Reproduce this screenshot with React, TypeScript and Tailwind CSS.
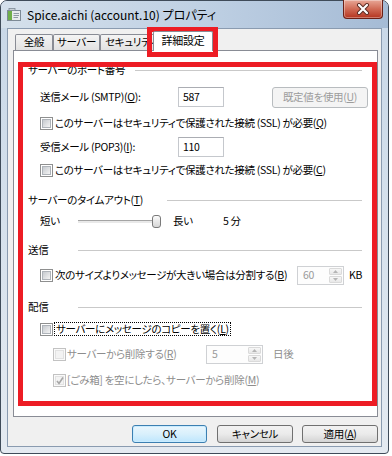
import React from "react";

function Check({ disabled, checked }: { disabled?: boolean; checked?: boolean }) {
  return (
    <span
      className={`relative flex h-[13px] w-[13px] shrink-0 items-center justify-center border ${
        disabled ? "border-[#c2c2c2] bg-[#fafafa]" : "border-[#8e8f8f] bg-white"
      }`}
    >
      <span
        className={`h-[9px] w-[9px] border ${
          disabled
            ? "border-[#e2e2e2] bg-[#f3f3f3]"
            : "border-[#aeb3b9] bg-gradient-to-br from-[#c6cacf] to-[#f4f4f4]"
        }`}
      />
      {checked && (
        <svg className="absolute left-[1px] top-[1px]" width="10" height="10" viewBox="0 0 10 10">
          <path d="M2 5 L4 7.5 L8 1.5" fill="none" stroke="#a6a6a6" strokeWidth="1.6" />
        </svg>
      )}
    </span>
  );
}

function Spin({ value, className }: { value: string; className: string }) {
  return (
    <div className={`flex shrink-0 border border-[#cfd1d4] bg-[#fdfdfd] ${className}`}>
      <span className="flex flex-1 items-center pl-[5px] text-[#9a9a9a]">{value}</span>
      <div className="flex w-[15px] flex-col gap-px p-px">
        <span className="flex flex-1 items-center justify-center rounded-[1px] border border-[#dadada] bg-gradient-to-b from-[#f7f7f7] to-[#e8e8e8]">
          <svg width="5" height="3" viewBox="0 0 5 3">
            <path d="M0 3 L2.5 0 L5 3 Z" fill="#b5b5b5" />
          </svg>
        </span>
        <span className="flex flex-1 items-center justify-center rounded-[1px] border border-[#dadada] bg-gradient-to-b from-[#f7f7f7] to-[#e8e8e8]">
          <svg width="5" height="3" viewBox="0 0 5 3">
            <path d="M0 0 L2.5 3 L5 0 Z" fill="#b5b5b5" />
          </svg>
        </span>
      </div>
    </div>
  );
}

function GroupHead({ children, w, className }: { children: React.ReactNode; w: string; className: string }) {
  return (
    <div className={`flex h-[18px] shrink-0 items-center ${className}`}>
      <span className={`shrink-0 whitespace-nowrap ${w}`}>{children}</span>
      <span className="mr-[7px] h-px flex-1 bg-[#c9c9c9]" />
    </div>
  );
}

export default function App() {
  return (
    <div className="relative h-[456px] w-[392px] overflow-hidden bg-white text-[10.5px] leading-none tracking-[-0.3px] text-black [font-family:'Noto_Sans_CJK_JP',sans-serif] [font-feature-settings:'palt']">
      {/* window frame */}
      <div className="flex h-[454px] w-[389px] flex-col rounded-t-[7px] rounded-b-[4px] border border-[#3f4b59] bg-gradient-to-b from-[#c8d7e7] via-[#d6e1ec] to-[#e4eaf1] px-[6px] pb-[6px]">
        {/* title bar */}
        <div className="relative -mx-[6px] flex h-[27px] shrink-0 items-center gap-[5px] rounded-t-[6px] bg-gradient-to-r from-[#d5e0eb] via-[#c0d1e4] to-[#a5bbd5] pl-[5px]">
          <svg width="16" height="16" viewBox="0 0 16 16">
            <rect x="1.5" y="3.5" width="13" height="10" fill="#e8ebee" stroke="#7d8a96" />
            <rect x="2" y="4" width="4" height="9" fill="#6fae4a" />
            <path d="M7.5 6.5 H13 M7.5 8.5 H13 M7.5 10.5 H12" stroke="#8e99a3" />
            <rect x="3" y="1.5" width="6" height="2" fill="#c9d0d6" stroke="#7d8a96" strokeWidth="0.8" />
          </svg>
          <span className="whitespace-nowrap text-[12px] tracking-normal text-black">Spice.aichi (account.10) プロパティ</span>
          <div className="absolute right-[5px] top-[-1px] flex h-[19px] w-[40px] items-center justify-center rounded-b-[4px] border border-t-0 border-[#6b2016] bg-gradient-to-b from-[#e7a797] via-[#d06a55] to-[#b4321c] shadow-[inset_0_0_0_1px_rgba(255,255,255,0.35)]">
            <svg width="14" height="12" viewBox="0 0 14 12">
              <path d="M3 2 L11 10 M11 2 L3 10" stroke="#5a2a22" strokeWidth="4" strokeLinecap="round" />
              <path d="M3 2 L11 10 M11 2 L3 10" stroke="#ffffff" strokeWidth="2.2" strokeLinecap="round" />
            </svg>
          </div>
        </div>

        {/* client area */}
        <div className="flex flex-1 flex-col border border-[#8a9bb0] bg-[#f0f0f0]">
          {/* tabs */}
          <div className="ml-[7px] mt-[2px] flex h-[19px] items-end">
            <div className="flex h-[16px] w-[38px] items-center justify-center rounded-t-[2px] border border-b-0 border-[#898c95] bg-gradient-to-b from-[#f4f4f4] to-[#e2e2e2]">
              全般
            </div>
            <div className="flex h-[16px] w-[47px] items-center justify-center rounded-t-[2px] border border-b-0 border-[#898c95] bg-gradient-to-b from-[#f4f4f4] to-[#e2e2e2]">
              サーバー
            </div>
            <div className="flex h-[16px] w-[56px] items-center overflow-hidden whitespace-nowrap rounded-t-[2px] border border-b-0 border-[#898c95] bg-gradient-to-b from-[#f4f4f4] to-[#e2e2e2] pl-[4px]">
              セキュリティ
            </div>
            <div className="relative z-10 -mb-px -ml-[3px] flex h-[20px] w-[60px] items-center justify-center rounded-t-[2px] border border-b-0 border-[#898c95] bg-white pb-[2px] text-[11px]">
              詳細設定
            </div>
          </div>

          {/* tab panel */}
          <div className="ml-[5px] flex h-[367px] w-[365px] flex-col border border-[#898c95] bg-white pl-[14px] pr-[8px]">
            <GroupHead w="w-[107px]" className="mt-[10px]">
              サーバーのポート番号
            </GroupHead>

            <div className="ml-[12px] mt-[8px] flex h-[20px] shrink-0 items-center">
              <span className="w-[138px] shrink-0 whitespace-nowrap">
                送信メール (SMTP)(<span className="underline">O</span>):
              </span>
              <span className="flex h-[20px] w-[46px] shrink-0 items-center border border-[#c5c8cd] border-t-[#abadb3] bg-white pl-[4px]">
                587
              </span>
              <span className="ml-[48px] flex h-[21px] w-[96px] shrink-0 items-center justify-center rounded-[3px] border border-[#b8bcbf] bg-[#f4f4f4] text-[#9c9c9c]">
                既定値を使用(<span className="underline">U</span>)
              </span>
            </div>

            <div className="ml-[12px] mt-[7px] flex h-[18px] shrink-0 items-center gap-[2px]">
              <Check />
              <span className="whitespace-nowrap">
                このサーバーはセキュリティで保護された接続 (SSL) が必要(<span className="underline">Q</span>)
              </span>
            </div>

            <div className="ml-[12px] mt-[5px] flex h-[20px] shrink-0 items-center">
              <span className="w-[138px] shrink-0 whitespace-nowrap">
                受信メール (POP3)(<span className="underline">I</span>):
              </span>
              <span className="flex h-[20px] w-[46px] shrink-0 items-center border border-[#c5c8cd] border-t-[#abadb3] bg-white pl-[4px]">
                110
              </span>
            </div>

            <div className="ml-[12px] mt-[4px] flex h-[18px] shrink-0 items-center gap-[2px]">
              <Check />
              <span className="whitespace-nowrap">
                このサーバーはセキュリティで保護された接続 (SSL) が必要(<span className="underline">C</span>)
              </span>
            </div>

            <GroupHead w="w-[139px]" className="mt-[12px]">
              サーバーのタイムアウト(<span className="underline">T</span>)
            </GroupHead>

            <div className="ml-[12px] mt-[4px] flex h-[16px] shrink-0 items-center">
              <span className="w-[38px] shrink-0">短い</span>
              <div className="flex w-[83px] shrink-0 items-center">
                <span className="h-[3px] flex-1 border-t border-[#a4a4a4] border-b-[#e4e4e4] bg-[#e9e9e9]" />
                <span className="-ml-[1px] h-[13px] w-[9px] rounded-[3px] border border-[#7a7a7a] bg-gradient-to-b from-[#fbfbfb] to-[#d6d6d6]" />
              </div>
              <span className="ml-[12px] w-[50px] shrink-0">長い</span>
              <span className="whitespace-nowrap">5 分</span>
            </div>

            <GroupHead w="w-[50px]" className="mt-[12px]">
              送信
            </GroupHead>

            <div className="ml-[12px] mt-[7px] flex h-[19px] shrink-0 items-center">
              <Check />
              <span className="ml-[2px] w-[242px] shrink-0 whitespace-nowrap">
                次のサイズよりメッセージが大きい場合は分割する(<span className="underline">B</span>)
              </span>
              <Spin value="60" className="h-[19px] w-[47px]" />
              <span className="ml-[5px]">KB</span>
            </div>

            <GroupHead w="w-[50px]" className="mt-[13px]">
              配信
            </GroupHead>

            <div className="ml-[12px] mt-[4px] flex h-[18px] shrink-0 items-center">
              <Check />
              <span className="ml-px flex h-[14px] items-center whitespace-nowrap border border-dotted border-black pl-px pr-px">
                サーバーにメッセージのコピーを置く(<span className="underline">L</span>)
              </span>
            </div>

            <div className="ml-[25px] mt-[7px] flex h-[19px] shrink-0 items-center text-[#8d8d8d]">
              <Check disabled />
              <span className="ml-[1px] w-[139px] shrink-0 whitespace-nowrap">
                サーバーから削除する(<span className="underline">R</span>)
              </span>
              <Spin value="5" className="h-[19px] w-[57px]" />
              <span className="ml-[10px]">日後</span>
            </div>

            <div className="ml-[25px] mt-[7px] flex h-[18px] shrink-0 items-center text-[#8d8d8d]">
              <Check disabled checked />
              <span className="ml-[1px] whitespace-nowrap">
                [ごみ箱] を空にしたら、サーバーから削除(<span className="underline">M</span>)
              </span>
            </div>
          </div>

          {/* dialog buttons */}
          <div className="ml-[124px] mt-[8px] flex h-[18px]">
            <button className="flex h-[18px] w-[75px] items-center justify-center rounded-[3px] border border-[#3c7fb1] bg-gradient-to-b from-[#eaf6fd] via-[#d9f0fc] to-[#bee6fd] shadow-[inset_0_0_0_1px_#c9ecff]">
              OK
            </button>
            <button className="ml-[10px] flex h-[18px] w-[76px] items-center justify-center rounded-[3px] border border-[#707070] bg-gradient-to-b from-[#f2f2f2] via-[#ebebeb] to-[#d4d4d4]">
              キャンセル
            </button>
            <button className="ml-[9px] flex h-[18px] w-[76px] items-center justify-center rounded-[3px] border border-[#707070] bg-gradient-to-b from-[#f2f2f2] via-[#ebebeb] to-[#d4d4d4]">
              適用(<span className="underline">A</span>)
            </button>
          </div>
        </div>
      </div>

      {/* red annotation boxes */}
      <div className="pointer-events-none absolute left-[147px] top-[27px] h-[30px] w-[71px] border-[5px] border-[#ed1c24]" />
      <div className="pointer-events-none absolute left-[18px] top-[62px] h-[344px] w-[359px] border-[5px] border-[#ed1c24]" />
    </div>
  );
}
